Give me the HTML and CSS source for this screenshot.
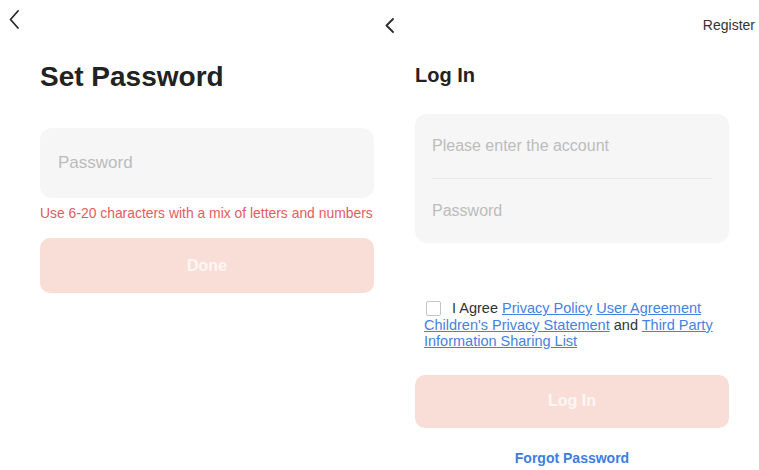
FILE: index.html
```html
<!DOCTYPE html>
<html lang="en">
<head>
<meta charset="utf-8">
<title>Set Password / Log In</title>
<link rel="stylesheet" href="styles.css">
</head>
<body>
<div class="screens">
  <section class="screen screen-set">
    <header class="nav">
      <svg class="back back-lg" viewBox="0 0 10 19" aria-hidden="true"><polyline points="9,1 1.5,9.5 9,18"/></svg>
    </header>
    <h1 class="title title-lg">Set Password</h1>
    <div class="field"><span class="placeholder">Password</span></div>
    <p class="hint">Use 6-20 characters with a mix of letters and numbers</p>
    <button class="primary primary-lg" type="button">Done</button>
  </section>

  <section class="screen screen-login">
    <header class="nav nav-login">
      <svg class="back back-sm" viewBox="0 0 9 15" aria-hidden="true"><polyline points="8,1 1.5,7.5 8,14"/></svg>
      <span class="register">Register</span>
    </header>
    <h1 class="title title-sm">Log In</h1>
    <div class="card">
      <div class="row"><span class="placeholder">Please enter the account</span></div>
      <div class="sep"></div>
      <div class="row"><span class="placeholder">Password</span></div>
    </div>
    <p class="agree"><span class="check"></span>I Agree <a href="#">Privacy Policy</a> <a href="#">User Agreement</a> <a href="#">Children's Privacy Statement</a> and <a href="#">Third Party</a> <a href="#">Information Sharing List</a></p>
    <button class="primary primary-sm" type="button">Log In</button>
    <a class="forgot" href="#">Forgot Password</a>
  </section>
</div>
</body>
</html>
```

FILE: styles.css
```css
* { box-sizing: border-box; }

html, body {
  margin: 0;
  padding: 0;
  background: #ffffff;
}

body {
  font-family: "Liberation Sans", Arial, sans-serif;
  color: #222222;
}

.screens {
  display: flex;
  width: 759px;
  height: 470px;
}

.screen {
  display: flex;
  flex-direction: column;
}

.screen-set {
  width: 380px;
  padding: 0 6px 0 40px;
}

.screen-login {
  width: 379px;
  padding: 0 30px 0 35px;
}

.nav {
  display: flex;
  align-items: flex-start;
}

.screen-set .nav {
  margin-left: -31px;
  padding-top: 10px;
}

.nav-login {
  justify-content: space-between;
  margin-left: -30px;
  margin-right: -26px;
  padding-top: 17px;
}

.back {
  display: block;
  fill: none;
  stroke: #2b2b2b;
  stroke-width: 1.8;
  stroke-linecap: round;
  stroke-linejoin: round;
}

.back-lg { width: 10px; height: 19px; }
.back-sm { width: 9px; height: 15px; margin-top: 1px; }

.register {
  font-size: 14px;
  line-height: 16px;
  color: #333333;
}

.title {
  margin: 0;
  font-weight: bold;
  color: #222222;
}

.title-lg {
  margin-top: 32px;
  font-size: 28px;
  line-height: 32px;
}

.title-sm {
  margin-top: 30px;
  font-size: 20px;
  line-height: 24px;
}

.placeholder {
  color: #bcbcbc;
}

.field {
  margin-top: 35px;
  height: 70px;
  border-radius: 12px;
  background: #f6f6f6;
  padding-left: 18px;
  display: flex;
  align-items: center;
  font-size: 17px;
}

.hint {
  margin: 7px 0 0;
  font-size: 13.9px;
  line-height: 16px;
  color: #e45b5e;
  white-space: nowrap;
}

.primary {
  border: 0;
  padding: 0;
  width: 100%;
  background: #f9ded7;
  color: rgba(255, 255, 255, 0.75);
  font-family: inherit;
  font-weight: bold;
  font-size: 16px;
  border-radius: 10px;
}

.primary-lg {
  margin-top: 17px;
  height: 55px;
}

.primary-sm {
  margin-top: 25px;
  height: 53px;
}

.card {
  margin-top: 27px;
  background: #f6f6f6;
  border-radius: 12px;
  font-size: 16px;
}

.row {
  height: 64px;
  padding-left: 17px;
  display: flex;
  align-items: center;
}

.sep {
  height: 1px;
  margin: 0 17px;
  background: #e9e9e9;
}

.agree {
  margin: 57px 9px 0;
  font-size: 14.5px;
  line-height: 16.5px;
  color: #333333;
}

.agree a {
  color: #4482e2;
  text-decoration: underline;
}

.check {
  display: inline-block;
  width: 15px;
  height: 15px;
  margin: 0 11px 0 2px;
  border: 1px solid #c4c4c4;
  border-radius: 2px;
  vertical-align: -3px;
  background: #ffffff;
}

.forgot {
  align-self: center;
  margin-top: 22px;
  font-size: 14px;
  line-height: 16px;
  font-weight: bold;
  color: #3d7ddf;
  text-decoration: none;
}
```
